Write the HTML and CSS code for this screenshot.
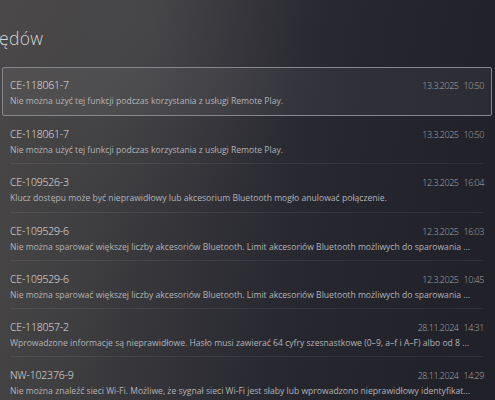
FILE: index.html
```html
<!DOCTYPE html>
<html lang="pl">
<head>
<meta charset="utf-8">
<link rel="stylesheet" href="styles.css">
</head>
<body>
<div class="screen">
  <h1 class="title">ędów</h1>
  <ul class="list">
    <li class="item selected">
      <div class="top"><span class="code">CE-118061-7</span><span class="date"><span>13.3.2025</span><span>10:50</span></span></div>
      <div class="desc">Nie można użyć tej funkcji podczas korzystania z usługi Remote Play.</div>
    </li>
    <li class="item">
      <div class="top"><span class="code">CE-118061-7</span><span class="date"><span>13.3.2025</span><span>10:50</span></span></div>
      <div class="desc">Nie można użyć tej funkcji podczas korzystania z usługi Remote Play.</div>
    </li>
    <li class="item">
      <div class="top"><span class="code">CE-109526-3</span><span class="date"><span>12.3.2025</span><span>16:04</span></span></div>
      <div class="desc">Klucz dostępu może być nieprawidłowy lub akcesorium Bluetooth mogło anulować połączenie.</div>
    </li>
    <li class="item">
      <div class="top"><span class="code">CE-109529-6</span><span class="date"><span>12.3.2025</span><span>16:03</span></span></div>
      <div class="desc">Nie można sparować większej liczby akcesoriów Bluetooth. Limit akcesoriów Bluetooth możliwych do sparowania ...</div>
    </li>
    <li class="item">
      <div class="top"><span class="code">CE-109529-6</span><span class="date"><span>12.3.2025</span><span>10:45</span></span></div>
      <div class="desc">Nie można sparować większej liczby akcesoriów Bluetooth. Limit akcesoriów Bluetooth możliwych do sparowania ...</div>
    </li>
    <li class="item">
      <div class="top"><span class="code">CE-118057-2</span><span class="date"><span>28.11.2024</span><span>14:31</span></span></div>
      <div class="desc">Wprowadzone informacje są nieprawidłowe. Hasło musi zawierać 64 cyfry szesnastkowe (0–9, a–f i A–F) albo od 8 ...</div>
    </li>
    <li class="item">
      <div class="top"><span class="code">NW-102376-9</span><span class="date"><span>28.11.2024</span><span>14:29</span></span></div>
      <div class="desc">Nie można znaleźć sieci Wi-Fi. Możliwe, że sygnał sieci Wi-Fi jest słaby lub wprowadzono nieprawidłowy identyfikat...</div>
    </li>
  </ul>
</div>
</body>
</html>
```

FILE: styles.css
```css
html, body {
  margin: 0;
  padding: 0;
}
body {
  width: 495px;
  height: 400px;
  overflow: hidden;
  font-family: "Open Sans", "Noto Sans", sans-serif;
  background:
    radial-gradient(ellipse 220px 300px at 150px 20px, rgba(120,118,120,0.18), rgba(0,0,0,0) 70%),
    linear-gradient(100deg, #4a4848 0%, #3f3e40 22%, #303036 45%, #25262e 65%, #1f2028 100%);
}
.screen {
  display: flex;
  flex-direction: column;
}
.title {
  margin: 28px 0 0 -1px;
  font-size: 17.5px;
  line-height: 20px;
  font-weight: 300;
  color: #d6d6d6;
  letter-spacing: 0.3px;
}
.list {
  list-style: none;
  margin: 19px 0 0 2px;
  padding: 0;
  width: 490px;
}
.item {
  position: relative;
  height: 48.3px;
  box-sizing: border-box;
  padding: 11px 8px 0 8px;
}
.item::after {
  content: "";
  position: absolute;
  left: 8px;
  right: 9px;
  bottom: 0;
  height: 1px;
  background: rgba(255,255,255,0.07);
}
.item.selected {
  height: 49px;
  border: 1px solid #86878d;
  border-radius: 2px;
  background: rgba(255,255,255,0.05);
  padding: 10px 7px 0 7px;
}
.item.selected::after {
  display: none;
}
.top {
  display: flex;
  justify-content: space-between;
  align-items: baseline;
  line-height: 14px;
}
.code {
  font-size: 10.5px;
  font-weight: 300;
  color: #e2e2e2;
  letter-spacing: -0.2px;
}
.date {
  display: flex;
  gap: 5px;
  font-size: 9px;
  font-weight: 300;
  color: #a9a9ad;
  letter-spacing: -0.45px;
}
.desc {
  margin-top: 3px;
  font-size: 8.6px;
  line-height: 11px;
  font-weight: 400;
  color: #b4b4b6;
  white-space: nowrap;
  overflow: hidden;
}
```
